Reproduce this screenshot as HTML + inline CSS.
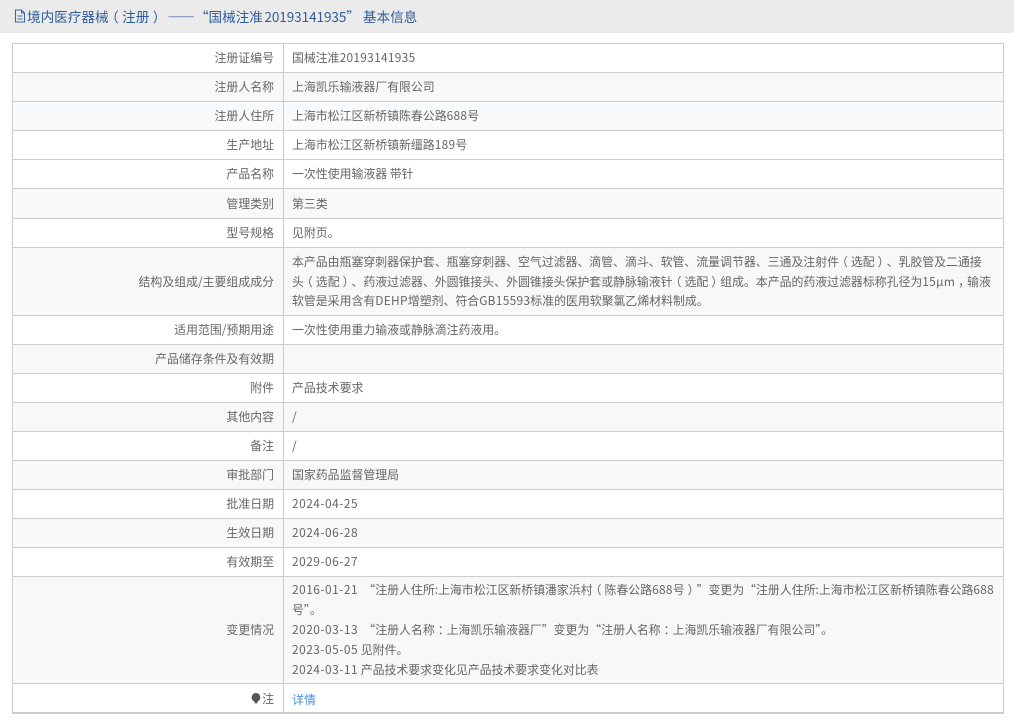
<!DOCTYPE html>
<html lang="zh"><head><meta charset="utf-8"><title>基本信息</title>
<style>
html,body{margin:0;padding:0;background:#fff}
body{width:1014px;height:726px;overflow:hidden;position:relative;font-family:"Noto Sans CJK SC","Liberation Sans",sans-serif;font-size:11.9px;color:#666}
.hd{position:absolute;left:0;top:0;width:1014px;height:33px;background:#ebebeb;color:#2f5d9b;font-size:13.6px;line-height:33px;white-space:nowrap}
.hd svg{position:absolute;left:14px;top:9px}
.hd span.t{position:absolute;left:27px;top:0}
.hd .n{letter-spacing:-.1px;margin-left:1.5px}
.hd .q{margin-left:0}
.hd .e{margin-left:4.5px;letter-spacing:.3px}
.tb{position:absolute;left:12px;top:43px;width:992px;height:671px;box-sizing:border-box;border:1px solid #ccc;border-bottom:2px solid #ccc}
.r{position:absolute;left:0;width:990px;border-bottom:1px solid #ccc;box-sizing:border-box}
.r.g{background:#f8f8f8}
.r.h{background:#f9fafb}
.l{position:absolute;left:0;top:0;width:261px;height:100%;display:flex;align-items:center;justify-content:flex-end;color:#666;line-height:20px}
.v{position:absolute;left:279px;top:0;height:100%;width:715px;display:flex;flex-direction:column;justify-content:center;line-height:19.6px;white-space:nowrap;color:#666}
.d{position:absolute;left:270px;top:0;width:1px;height:100%;background:#ccc}
.v div{height:19.6px}
.v.c{line-height:20px}
.v.c div{height:20px}
.a{color:#4a90d9}
.p{display:inline-block;width:1em;text-align:center;font-feature-settings:"halt"}
.n{letter-spacing:.3px}
.t2{letter-spacing:.5px}
</style></head><body>
<div class="hd"><svg width="12" height="14" viewBox="0 0 12 14" fill="none" stroke="#3b67a8" stroke-width="1.1"><path d="M1.5 1h6l3 3v9h-9zM7.5 1v3h3M3.5 7h5M3.5 10h5"/></svg><span class="t">境内医疗器械<span class="p">（</span>注册<span class="p">）</span><span class="e">——</span>“国械注准<span class="n">20193141935</span><span class="q">”</span><span style="margin-left:3px">基本信息</span></span></div>
<div class="tb">
<div class="r" style="top:0;height:29px"><div class="l">注册证编号</div><i class="d"></i><div class="v"><div>国械注准<span class="n">20193141935</span></div></div></div>
<div class="r g" style="top:29px;height:29px"><div class="l">注册人名称</div><i class="d"></i><div class="v">上海凯乐输液器厂有限公司</div></div>
<div class="r h" style="top:58px;height:29px"><div class="l">注册人住所</div><i class="d"></i><div class="v"><div>上海市松江区新桥镇陈春公路<span class="n">688</span>号</div></div></div>
<div class="r" style="top:87px;height:29px"><div class="l">生产地址</div><i class="d"></i><div class="v"><div>上海市松江区新桥镇新缰路<span class="n">189</span>号</div></div></div>
<div class="r" style="top:116px;height:29px"><div class="l">产品名称</div><i class="d"></i><div class="v">一次性使用输液器 带针</div></div>
<div class="r g" style="top:145px;height:30px"><div class="l">管理类别</div><i class="d"></i><div class="v">第三类</div></div>
<div class="r" style="top:175px;height:29px"><div class="l">型号规格</div><i class="d"></i><div class="v">见附页。</div></div>
<div class="r g" style="top:204px;height:68px"><div class="l">结构及组成/主要组成成分</div><i class="d"></i><div class="v"><div>本产品由瓶塞穿刺器保护套、瓶塞穿刺器、空气过滤器、滴管、滴斗、软管、流量调节器、三通及注射件<span class="p">（</span>选配<span class="p">）</span>、乳胶管及二通接</div><div>头<span class="p">（</span>选配<span class="p">）</span>、药液过滤器、外圆锥接头、外圆锥接头保护套或静脉输液针<span class="p">（</span>选配<span class="p">）</span>组成。本产品的药液过滤器标称孔径为<span class="n">15μm</span><span class="p">，</span>输液</div><div>软管是采用含有<span class="n">DEHP</span>增塑剂、符合<span class="n">GB15593</span>标准的医用软聚氯乙烯材料制成。</div></div></div>
<div class="r" style="top:272px;height:29px"><div class="l">适用范围/预期用途</div><i class="d"></i><div class="v">一次性使用重力输液或静脉滴注药液用。</div></div>
<div class="r g" style="top:301px;height:29px"><div class="l">产品储存条件及有效期</div><i class="d"></i><div class="v"></div></div>
<div class="r" style="top:330px;height:29px"><div class="l">附件</div><i class="d"></i><div class="v">产品技术要求</div></div>
<div class="r g" style="top:359px;height:29px"><div class="l">其他内容</div><i class="d"></i><div class="v">/</div></div>
<div class="r" style="top:388px;height:29px"><div class="l">备注</div><i class="d"></i><div class="v">/</div></div>
<div class="r g" style="top:417px;height:29px"><div class="l">审批部门</div><i class="d"></i><div class="v">国家药品监督管理局</div></div>
<div class="r" style="top:446px;height:29px"><div class="l">批准日期</div><i class="d"></i><div class="v"><div><span class="t2">2024-04-25</span></div></div></div>
<div class="r g" style="top:475px;height:29px"><div class="l">生效日期</div><i class="d"></i><div class="v"><div><span class="t2">2024-06-28</span></div></div></div>
<div class="r" style="top:504px;height:29px"><div class="l">有效期至</div><i class="d"></i><div class="v"><div><span class="t2">2029-06-27</span></div></div></div>
<div class="r g" style="top:533px;height:107px"><div class="l">变更情况</div><i class="d"></i><div class="v c"><div><span class="t2">2016-01-21</span> &nbsp;“注册人住所:上海市松江区新桥镇潘家浜村<span class="p">（</span>陈春公路<span class="n">688</span>号<span class="p">）</span>”变更为“注册人住所:上海市松江区新桥镇陈春公路<span class="n">688</span></div><div>号”。</div><div><span class="t2">2020-03-13</span> &nbsp;“注册人名称<span class="p">：</span>上海凯乐输液器厂”变更为“注册人名称<span class="p">：</span>上海凯乐输液器厂有限公司”。</div><div><span class="t2">2023-05-05</span> 见附件。</div><div><span class="t2">2024-03-11</span> 产品技术要求变化见产品技术要求变化对比表</div></div></div>
<div class="r" style="top:640px;height:29px;border-bottom:0"><div class="l"><svg width="10" height="13" viewBox="0 0 10 13" style="margin-right:1px"><path d="M5 1a4.4 4.4 0 0 1 2.4 8L5 12 2.6 9A4.4 4.4 0 0 1 5 1z" fill="#555"/></svg>注</div><i class="d"></i><div class="v a" style="top:1px;font-size:12px">详情</div></div>
</div>
</body></html>
